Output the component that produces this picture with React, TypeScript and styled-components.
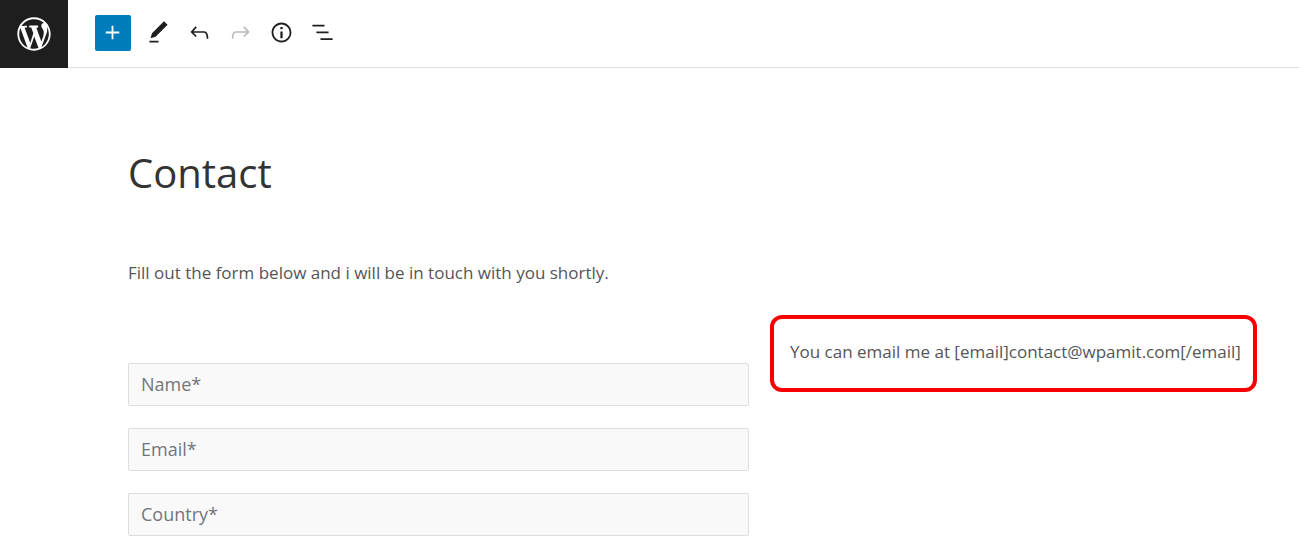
import React from "react";
import styled, { createGlobalStyle } from "styled-components";

const GlobalStyle = createGlobalStyle`
  *, *::before, *::after { box-sizing: border-box; }
  body {
    margin: 0;
    background: #fff;
    color: #555;
    font-family: "Open Sans", "Noto Sans", sans-serif;
    font-size: 17px;
    line-height: 28px;
  }
`;

const Header = styled.header`
  display: flex;
  align-items: flex-start;
  height: 68px;
  border-bottom: 1px solid #e0e0e0;
`;

const HomeLink = styled.a`
  display: flex;
  flex: none;
  align-items: center;
  justify-content: center;
  width: 68px;
  height: 68px;
  background: #1e1e1e;
  color: #fff;
`;

const Toolbar = styled.div`
  display: flex;
  align-items: center;
  padding: 15px 0 0 27px;
`;

const ToolButton = styled.button<{ $primary?: boolean }>`
  display: flex;
  align-items: center;
  justify-content: center;
  width: ${(p) => (p.$primary ? "36px" : "41px")};
  height: 36px;
  margin: 0 ${(p) => (p.$primary ? "7px" : "0")} 0 0;
  padding: 0 ${(p) => (p.$primary ? "1px" : "0")} 1px 0;
  border: 0;
  border-radius: 2px;
  background: ${(p) => (p.$primary ? "#007cba" : "transparent")};
  color: ${(p) => (p.$primary ? "#fff" : "#1e1e1e")};

  &:disabled { color: #bbb; }
`;

const Glyph = styled.svg`
  display: block;
  flex: none;
  fill: currentColor;
`;

const Content = styled.main`
  padding: 76px 42px 16px 128px;
`;

const Title = styled.h1`
  margin: 0;
  color: #333;
  font-size: 40px;
  font-weight: 400;
  line-height: 58px;
`;

const Intro = styled.p`
  margin: 57px 0 28px;
`;

const Columns = styled.div`
  display: grid;
  grid-template-columns: 621fr 487fr;
  column-gap: 21px;
  align-items: start;
`;

const Form = styled.form`
  display: grid;
  row-gap: 22px;
  padding-top: 48px;
`;

const Field = styled.input`
  width: 100%;
  height: 43px;
  padding: 0 12px 1px;
  border: 1px solid #ddd;
  border-radius: 2px;
  background: #f9f9f9;
  color: #555;
  font: inherit;
  font-size: 18px;

  &::placeholder { color: #72757a; opacity: 1; }
`;

const Callout = styled.div`
  padding: 19px 12px 22px 16px;
  border: 4px solid #f70000;
  border-radius: 12px;

  p { margin: 0; white-space: nowrap; line-height: 28px; }
`;

const paths = {
  plus: "M18 11.2h-5.2V6h-1.6v5.2H6v1.6h5.2V18h1.6v-5.2H18z",
  edit: "M20.1 5.1L16.9 2 6.2 12.7l-1.3 4.4 4.5-1.3L20.1 5.1zM4 20.8h8v-1.5H4v1.5z",
  undo: "M18.3 11.7c-.6-.6-1.4-.9-2.3-.9H6.7l2.9-3.3-1.1-1-4.5 5L8.5 16l1-1-2.7-2.7H16c.5 0 .9.2 1.3.5 1 1 1 3.4 1 4.5v.3h1.5v-.2c0-1.5 0-4.3-1.5-5.7z",
  redo: "M15.6 6.5l-1.1 1 2.9 3.3H8c-.9 0-1.7.3-2.3.9-1.4 1.5-1.4 4.2-1.4 5.6v.2h1.5v-.3c0-1.1 0-3.5 1-4.5.3-.3.7-.5 1.3-.5h9.2L14.5 15l1.1 1.1 4.6-4.6-4.6-5z",
  info: "M12 3.2c-4.8 0-8.8 3.9-8.8 8.8 0 4.8 3.9 8.8 8.8 8.8 4.8 0 8.8-3.9 8.8-8.8 0-4.8-4-8.8-8.8-8.8zm0 16c-4 0-7.2-3.3-7.2-7.2C4.8 8 8 4.8 12 4.8s7.2 3.3 7.2 7.2c0 4-3.2 7.2-7.2 7.2zM11 17h2v-6h-2v6zm0-8h2V7h-2v2z",
  list: "M13.8 5.2H3v1.5h10.8V5.2zm-3.6 12v1.5H21v-1.5H10.2zm7.2-6H6.6v1.5h10.8v-1.5z",
  logo: "M20 10c0-5.51-4.49-10-10-10C4.48 0 0 4.49 0 10c0 5.52 4.48 10 10 10 5.51 0 10-4.48 10-10zM7.78 15.37L4.37 6.22c.55-.02 1.17-.08 1.17-.08.5-.06.44-1.13-.06-1.11 0 0-1.45.11-2.37.11-.18 0-.37 0-.58-.01C4.12 2.69 6.87 1.11 10 1.11c2.33 0 4.45.87 6.05 2.34-.68-.11-1.65.39-1.65 1.58 0 .74.45 1.36.9 2.1.35.61.55 1.36.55 2.46 0 1.49-1.4 5-1.4 5l-3.03-8.37c.54-.02.82-.17.82-.17.5-.05.44-1.25-.06-1.22 0 0-1.44.12-2.38.12-.87 0-2.33-.12-2.33-.12-.5-.03-.56 1.2-.06 1.22l.92.08 1.26 3.41zM17.41 10c.24-.64.74-1.87.43-4.25.7 1.29 1.05 2.71 1.05 4.25 0 3.29-1.73 6.24-4.4 7.78.97-2.59 1.94-5.2 2.92-7.78zM6.1 18.09C3.12 16.65 1.11 13.53 1.11 10c0-1.3.23-2.48.72-3.59C3.25 10.3 4.67 14.2 6.1 18.09zm4.03-6.63l2.58 6.98c-.86.29-1.76.45-2.71.45-.79 0-1.57-.11-2.29-.33.81-2.38 1.62-4.74 2.42-7.1z",
};

function Icon({ name }: { name: keyof typeof paths }) {
  return (
    <Glyph width="27" height="27" viewBox="0 0 24 24" aria-hidden="true">
      <path d={paths[name]} />
    </Glyph>
  );
}

const tools: { name: keyof typeof paths; label: string; disabled?: boolean }[] = [
  { name: "edit", label: "Tools" },
  { name: "undo", label: "Undo" },
  { name: "redo", label: "Redo", disabled: true },
  { name: "info", label: "Details" },
  { name: "list", label: "List view" },
];

export default function App() {
  return (
    <>
      <GlobalStyle />
      <Header>
        <HomeLink href="#" aria-label="View pages">
          <Glyph width="40" height="40" viewBox="-2 -2 24 24" aria-hidden="true">
            <path d={paths.logo} />
          </Glyph>
        </HomeLink>
        <Toolbar role="toolbar" aria-label="Document tools">
          <ToolButton $primary type="button" aria-label="Add block">
            <Icon name="plus" />
          </ToolButton>
          {tools.map((t) => (
            <ToolButton key={t.name} type="button" aria-label={t.label} disabled={t.disabled}>
              <Icon name={t.name} />
            </ToolButton>
          ))}
        </Toolbar>
      </Header>
      <Content>
        <Title>Contact</Title>
        <Intro>Fill out the form below and i will be in touch with you shortly.</Intro>
        <Columns>
          <Form>
            <Field type="text" placeholder="Name*" aria-label="Name" />
            <Field type="email" placeholder="Email*" aria-label="Email" />
            <Field type="text" placeholder="Country*" aria-label="Country" />
          </Form>
          <Callout>
            <p>You can email me at [email]contact@wpamit.com[/email]</p>
          </Callout>
        </Columns>
      </Content>
    </>
  );
}
